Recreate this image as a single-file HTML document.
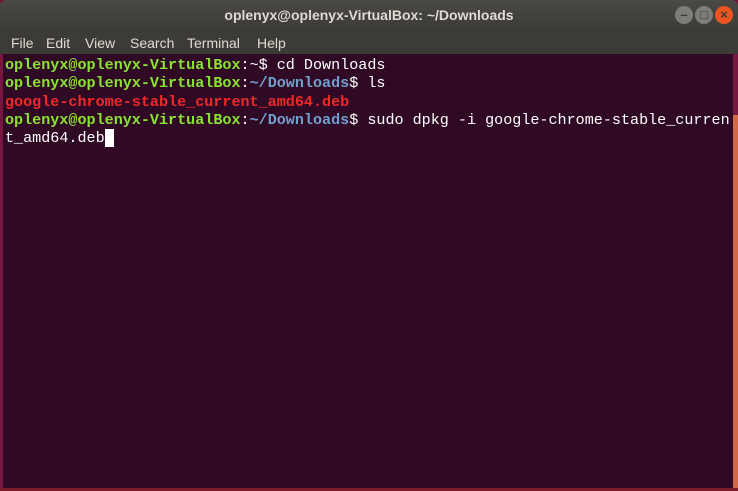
<!DOCTYPE html>
<html><head><style>
html,body{margin:0;padding:0;width:738px;height:491px;overflow:hidden;background:#300a24;}
.title{position:absolute;left:0;top:0;width:738px;height:30px;background:linear-gradient(#4a4945,#3c3b37);border-radius:6px 6px 0 0;}
.title .t{position:absolute;left:0;width:738px;top:7px;text-align:center;color:#dfdbd2;font:bold 14px "Liberation Sans",sans-serif;}
.btn{position:absolute;top:6px;width:18px;height:18px;border-radius:50%;background:#7d7c78;color:#3c3b37;font:bold 13px "Liberation Sans",sans-serif;text-align:center;line-height:18px;}
.menu{position:absolute;left:0;top:30px;width:738px;height:24px;background:#3c3b37;color:#dfdbd2;font:14px "Liberation Sans",sans-serif;}
.menu span{position:absolute;top:5px;}
.term{position:absolute;left:3px;top:54px;width:730px;height:434px;background:#300a24;}
pre{margin:0;position:absolute;left:5px;top:56px;font:15.1px/18.3px "Liberation Mono",monospace;color:#fff;}
.g{color:#8ae234;font-weight:bold}.b{color:#729fcf;font-weight:bold}.r{color:#ef2929;font-weight:bold}
.cur{background:#fff;color:#300a24}
</style></head><body>
<div style="position:absolute;left:0;top:0;width:738px;height:491px;background:#77163f"></div>
<div style="position:absolute;left:0;top:488px;width:738px;height:3px;background:#7c1a2a"></div>
<div style="position:absolute;left:733px;top:115px;width:5px;height:373px;background:#d46a43"></div>
<div class="term"></div>
<div class="title"><div class="t">oplenyx@oplenyx-VirtualBox: ~/Downloads</div>
<div class="btn" style="left:675px">–</div><div class="btn" style="left:695px">□</div><div class="btn" style="left:715px;background:#e95420;color:#3c3b37">×</div></div>
<div class="menu"><span style="left:11px">File</span><span style="left:46px">Edit</span><span style="left:85px">View</span><span style="left:130px">Search</span><span style="left:187px">Terminal</span><span style="left:257px">Help</span></div>
<pre><span class="g">oplenyx@oplenyx-VirtualBox</span>:~$ cd Downloads
<span class="g">oplenyx@oplenyx-VirtualBox</span>:<span class="b">~/Downloads</span>$ ls
<span class="r">google-chrome-stable_current_amd64.deb</span>
<span class="g">oplenyx@oplenyx-VirtualBox</span>:<span class="b">~/Downloads</span>$ sudo dpkg -i google-chrome-stable_curren
t_amd64.deb<span class="cur"> </span></pre>
</body></html>
